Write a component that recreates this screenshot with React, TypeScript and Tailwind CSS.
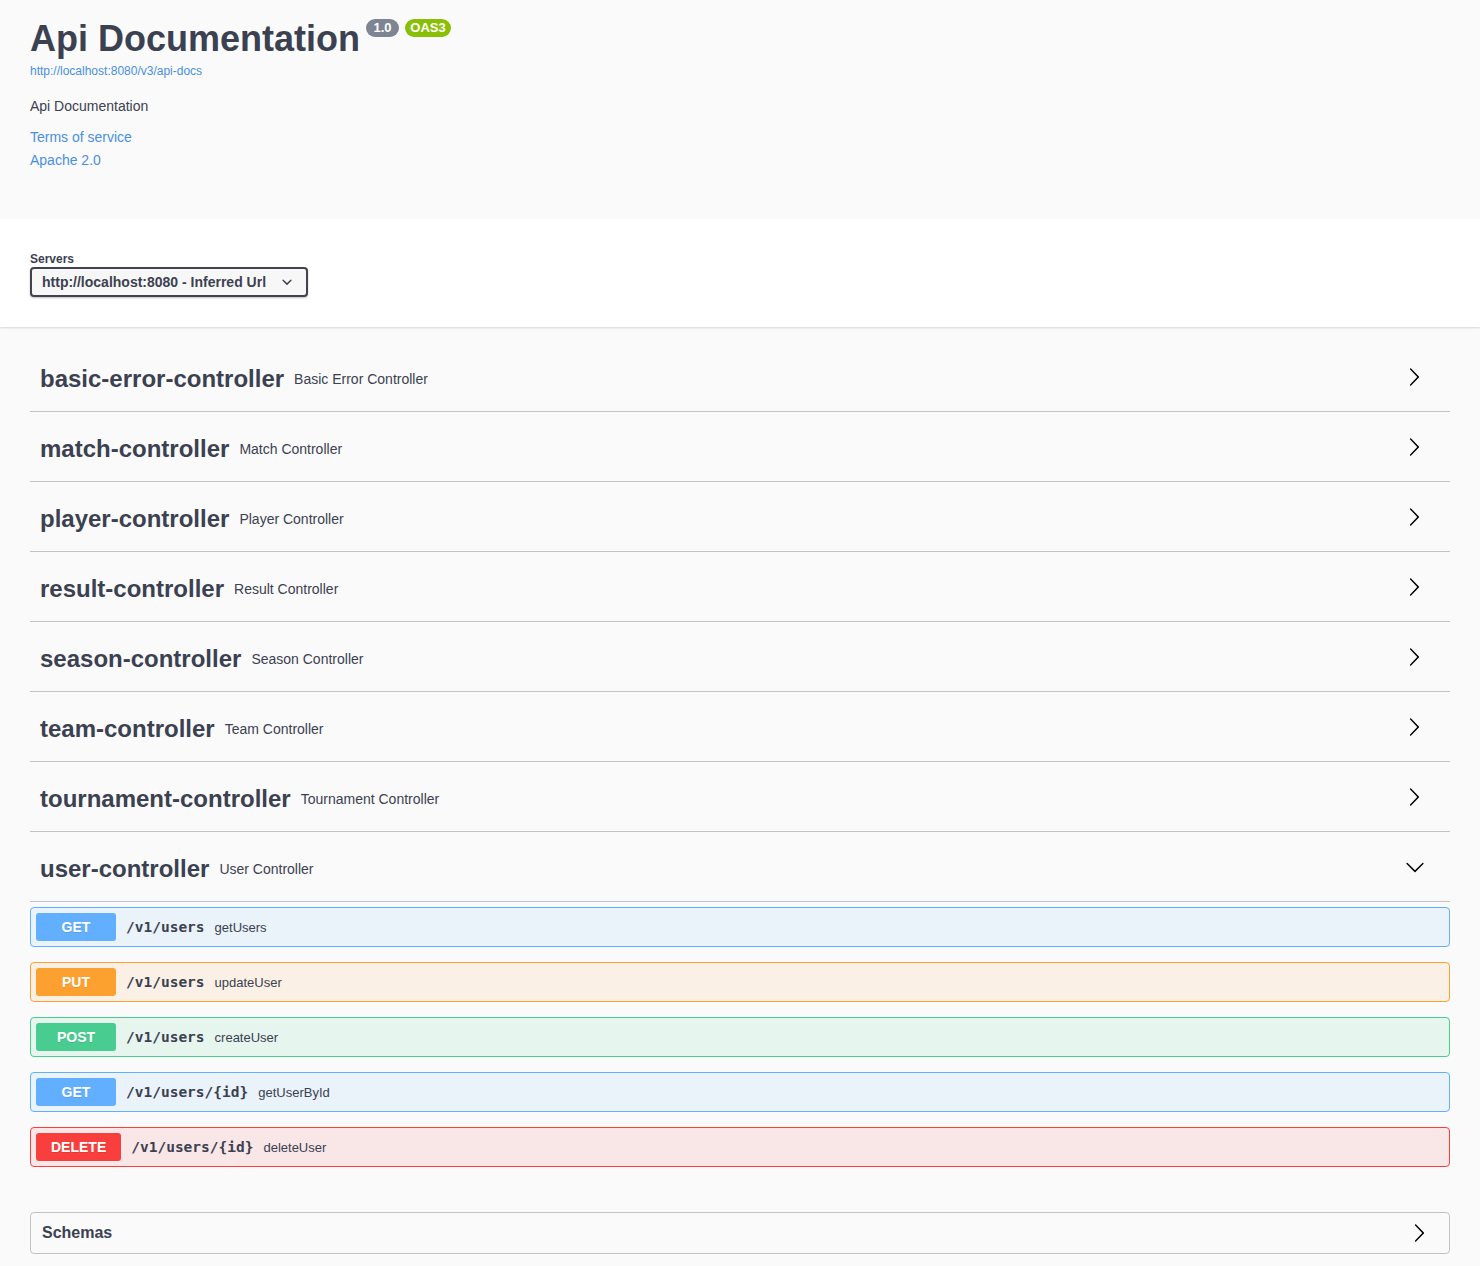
import React from "react";

type Op = {
    method: string;
    path: string;
    summary: string;
    badge: string;
    border: string;
    bg: string;
};

const tags = [
    { name: "basic-error-controller", desc: "Basic Error Controller" },
    { name: "match-controller", desc: "Match Controller" },
    { name: "player-controller", desc: "Player Controller" },
    { name: "result-controller", desc: "Result Controller" },
    { name: "season-controller", desc: "Season Controller" },
    { name: "team-controller", desc: "Team Controller" },
    { name: "tournament-controller", desc: "Tournament Controller" },
];

const ops: Op[] = [
    { method: "GET", path: "/v1/users", summary: "getUsers", badge: "bg-[#61affe]", border: "border-[#61affe]", bg: "bg-[#61affe]/10" },
    { method: "PUT", path: "/v1/users", summary: "updateUser", badge: "bg-[#fca130]", border: "border-[#fca130]", bg: "bg-[#fca130]/10" },
    { method: "POST", path: "/v1/users", summary: "createUser", badge: "bg-[#49cc90]", border: "border-[#49cc90]", bg: "bg-[#49cc90]/10" },
    { method: "GET", path: "/v1/users/{id}", summary: "getUserById", badge: "bg-[#61affe]", border: "border-[#61affe]", bg: "bg-[#61affe]/10" },
    { method: "DELETE", path: "/v1/users/{id}", summary: "deleteUser", badge: "bg-[#f93e3e]", border: "border-[#f93e3e]", bg: "bg-[#f93e3e]/10" },
];

function Arrow({ down = false }: { down?: boolean }) {
    return (
        <svg
            width="20"
            height="20"
            viewBox="0 0 20 20"
            className={`mb-[5px] shrink-0 ${down ? "rotate-90" : ""}`}
        >
            <path
                fill="#000"
                d="M13.25 10L6.109 2.58a.697.697 0 010-.979.68.68 0 01.969 0l7.83 7.908a.697.697 0 010 .979l-7.83 7.908a.68.68 0 01-.969 0 .697.697 0 010-.979L13.25 10z"
            />
        </svg>
    );
}

function TagRow({ name, desc, open = false }: { name: string; desc: string; open?: boolean }) {
    return (
        <div className="mb-[5px] flex h-[65px] items-center justify-between border-b border-[#3b4151]/30 pl-[10px] pr-[26px]">
            <div className="flex items-center">
                <span className="text-[24px] font-bold leading-[30px]">{name}</span>
                <span className="ml-[10px] text-[14px] leading-[18px]">{desc}</span>
            </div>
            {open ? (
                <div className="-mr-[1px]">
                    <Arrow down />
                </div>
            ) : (
                <Arrow />
            )}
        </div>
    );
}

export default function App() {
    return (
        <div className="min-h-screen bg-[#fafafa] pb-[12px] font-['Liberation_Sans',Arial,sans-serif] text-[#3b4151]">
            <div className="px-[30px] pb-[51px] pt-[19px]">
                <div className="flex items-start">
                    <h2 className="text-[36px] font-bold leading-[40px]">Api Documentation</h2>
                    <span className="ml-[6px] h-[18px] w-[33px] rounded-full bg-[#7d8492] text-center text-[13px] font-bold leading-[18px] text-white">
                        1.0
                    </span>
                    <span className="ml-[6px] h-[18px] w-[46px] rounded-full bg-[#89bf04] text-center text-[13px] font-bold leading-[18px] text-white">
                        OAS3
                    </span>
                </div>
                <a className="mt-[5px] block text-[12px] leading-[14px] text-[#4990e2]">
                    http://localhost:8080/v3/api-docs
                </a>
                <p className="mt-[20px] text-[14px] leading-[16px]">Api Documentation</p>
                <a className="mt-[15px] block text-[14px] leading-[16px] text-[#4990e2]">
                    Terms of service
                </a>
                <a className="mt-[7px] block text-[14px] leading-[16px] text-[#4990e2]">Apache 2.0</a>
            </div>

            <div className="bg-white px-[30px] pb-[30px] pt-[33px] shadow-[0_1px_2px_0_rgba(0,0,0,0.15)]">
                <div className="text-[12px] font-bold leading-[14px]">Servers</div>
                <div className="mt-[1px] flex h-[30px] w-[278px] items-center justify-between rounded-[4px] border-2 border-[#41444e] bg-[#f7f7f7] pl-[10px] pr-[9px] shadow-[0_1px_2px_0_rgba(0,0,0,0.25)]">
                    <span className="text-[14px] font-bold">http://localhost:8080 - Inferred Url</span>
                    <svg width="20" height="20" viewBox="0 0 20 20">
                        <path
                            fill="#3b4151"
                            d="M13.418 7.859a.695.695 0 01.978 0 .68.68 0 010 .969l-3.908 3.83a.697.697 0 01-.979 0l-3.908-3.83a.68.68 0 010-.969.695.695 0 01.978 0L10 11l3.418-3.141z"
                        />
                    </svg>
                </div>
            </div>

            <div className="px-[30px] pt-[20px]">
                {tags.map((t) => (
                    <TagRow key={t.name} name={t.name} desc={t.desc} />
                ))}
                <TagRow name="user-controller" desc="User Controller" open />

                <div className="flex flex-col gap-[15px]">
                    {ops.map((op, i) => (
                        <div
                            key={i}
                            className={`flex h-[40px] items-center rounded-[4px] border p-[5px] ${op.border} ${op.bg}`}
                        >
                            <span
                                className={`flex h-[28px] min-w-[80px] items-center justify-center rounded-[3px] px-[15px] text-[14px] font-bold text-white [text-shadow:0_1px_0_rgba(0,0,0,0.1)] ${op.badge}`}
                            >
                                {op.method}
                            </span>
                            <span className="px-[10px] pt-[2px] font-['DejaVu_Sans_Mono',monospace] text-[14.5px] font-bold">
                                {op.path}
                            </span>
                            <span className="pt-[1px] text-[13px]">{op.summary}</span>
                        </div>
                    ))}
                </div>

                <div className="mt-[45px] flex h-[42px] items-center justify-between rounded-[4px] border border-[#3b4151]/30 pl-[11px] pr-[20px]">
                    <span className="text-[16px] font-bold">Schemas</span>
                    <svg width="20" height="20" viewBox="0 0 20 20">
                        <path
                            fill="#000"
                            d="M13.25 10L6.109 2.58a.697.697 0 010-.979.68.68 0 01.969 0l7.83 7.908a.697.697 0 010 .979l-7.83 7.908a.68.68 0 01-.969 0 .697.697 0 010-.979L13.25 10z"
                        />
                    </svg>
                </div>
            </div>
        </div>
    );
}
